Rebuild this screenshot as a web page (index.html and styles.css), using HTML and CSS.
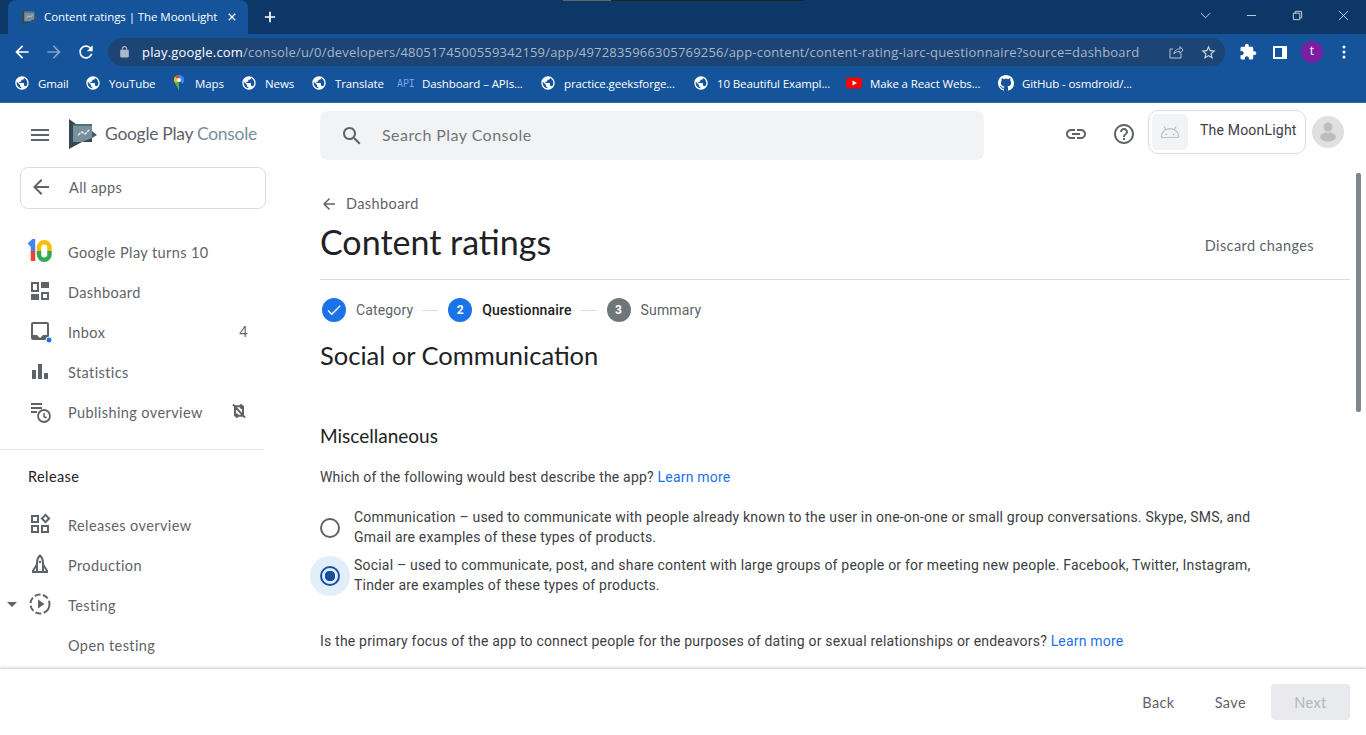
FILE: index.html
```html
<!DOCTYPE html>
<html lang="en">
<head>
<meta charset="utf-8">
<title>Content ratings | The MoonLight</title>
<link rel="stylesheet" href="styles.css">
</head>
<body>
<svg class="sprite" aria-hidden="true">
  <symbol id="globe" viewBox="0 0 24 24"><path d="M12 2C6.48 2 2 6.48 2 12s4.48 10 10 10 10-4.48 10-10S17.52 2 12 2zm-1 17.93c-3.95-.49-7-3.85-7-7.93 0-.62.08-1.21.21-1.79L9 15v1c0 1.1.9 2 2 2v1.93zm6.9-2.54c-.26-.81-1-1.39-1.9-1.39h-1v-3c0-.55-.45-1-1-1H8v-2h2c.55 0 1-.45 1-1V7h2c1.1 0 2-.9 2-2v-.41c2.93 1.19 5 4.06 5 7.41 0 2.08-.8 3.97-2.1 5.39z"/></symbol>
  <symbol id="arrow" viewBox="0 0 24 24"><path d="M20 11H7.83l5.59-5.59L12 4 4 12l8 8 1.41-1.41L7.83 13H20v-2z"/></symbol>
  <symbol id="play" viewBox="0 0 28 30"><path d="M0 0L7 5H4V23H13L0 30z" fill="#37474f"/><path d="M4 5h19v18H4z" fill="#78909c"/><path d="M4 5h19v2H4z" fill="#546e7a"/><path d="M23 12l5 4-5 3z" fill="#455a64"/><path d="M23 19L13 23H23z" fill="#37474f"/><path d="M9 16l4-3 3 2 4-4" fill="none" stroke="#eceff1" stroke-width="1.5" stroke-dasharray="3 1"/></symbol>
</svg>

<header class="chrome">
  <div class="tabstrip">
    <div class="notch"></div>
    <div class="tab">
      <svg class="tab-fav"><use href="#play"/></svg>
      <span class="tab-title">Content ratings | The MoonLight</span>
      <svg class="tab-x" viewBox="0 0 10 10"><path d="M1 1l8 8M9 1l-8 8"/></svg>
    </div>
    <svg class="tab-new" viewBox="0 0 14 14"><path d="M7 1v12M1 7h12"/></svg>
    <div class="winbtns">
      <svg class="win" viewBox="0 0 12 12"><path d="M1 3.5l5 5 5-5"/></svg>
      <svg class="win" viewBox="0 0 12 12"><path d="M1 6h10"/></svg>
      <svg class="win" viewBox="0 0 12 12"><path d="M1.5 3.5h7v7h-7zM3.5 3.5v-2h7v7h-2"/></svg>
      <svg class="win" viewBox="0 0 12 12"><path d="M1 1l10 10M11 1L1 11"/></svg>
    </div>
  </div>
  <div class="toolbar">
    <svg class="tool"><use href="#arrow"/></svg>
    <svg class="tool dim flip"><use href="#arrow"/></svg>
    <svg class="tool" viewBox="0 0 24 24"><path d="M17.65 6.35C16.2 4.9 14.21 4 12 4c-4.42 0-7.99 3.58-7.99 8s3.57 8 7.99 8c3.73 0 6.84-2.55 7.73-6h-2.08c-.82 2.33-3.04 4-5.65 4-3.31 0-6-2.69-6-6s2.69-6 6-6c1.66 0 3.14.69 4.22 1.78L13 11h7V4l-2.35 2.35z"/></svg>
    <div class="omnibox">
      <svg class="lock" viewBox="0 0 24 24"><path d="M18 8h-1V6c0-2.76-2.24-5-5-5S7 3.24 7 6v2H6c-1.1 0-2 .9-2 2v10c0 1.1.9 2 2 2h12c1.1 0 2-.9 2-2V10c0-1.1-.9-2-2-2zM9 6c0-1.66 1.34-3 3-3s3 1.34 3 3v2H9V6z"/></svg>
      <span class="url"><b>play.google.com</b>/console/u/0/developers/4805174500559342159/app/4972835966305769256/app-content/content-rating-iarc-questionnaire?source=dashboard</span>
      <svg class="share" viewBox="0 0 16 16"><path d="M13 9.5V14H2V5h3M6 10c0-3 2-5 6-5V2.500l3 3.500-3 3.500V7.500c-3 0-5 .5-6 2.500z"/></svg>
      <svg class="star" viewBox="0 0 24 24"><path d="M22 9.24l-7.19-.62L12 2 9.19 8.63 2 9.24l5.46 4.73L5.82 21 12 17.27 18.18 21l-1.630-7.030L22 9.240zM12 15.400l-3.760 2.270 1-4.280-3.320-2.880 4.380-.38L12 6.100l1.710 4.040 4.380.38-3.320 2.880 1 4.280L12 15.400z"/></svg>
    </div>
    <svg class="ext" viewBox="0 0 24 24"><path d="M20.500 11H19V7c0-1.100-.9-2-2-2h-4V3.500C13 2.120 11.880 1 10.500 1S8 2.120 8 3.500V5H4c-1.100 0-1.990.9-1.990 2v3.800H3.500c1.490 0 2.700 1.210 2.700 2.700s-1.210 2.700-2.700 2.700H2V20c0 1.100.9 2 2 2h3.800v-1.500c0-1.490 1.210-2.700 2.700-2.700 1.490 0 2.700 1.210 2.700 2.700V22H17c1.100 0 2-.9 2-2v-4h1.500c1.380 0 2.500-1.120 2.500-2.500S21.880 11 20.500 11z"/></svg>
    <svg class="panel" viewBox="0 0 14 13"><path fill-rule="evenodd" d="M0 0h14v13H0zM2 2v9h7V2z"/></svg>
    <span class="profile">t</span>
    <svg class="dots" viewBox="0 0 4 14"><circle cx="2" cy="2" r="1.500"/><circle cx="2" cy="7" r="1.500"/><circle cx="2" cy="12" r="1.500"/></svg>
  </div>
  <nav class="bookmarks">
    <a class="bm b1"><svg class="bm-ic"><use href="#globe"/></svg>Gmail</a>
    <a class="bm b2"><svg class="bm-ic"><use href="#globe"/></svg>YouTube</a>
    <a class="bm b3"><svg class="bm-ic" viewBox="0 0 16 16"><path d="M8 0C5 0 3 2.200 3 5c0 3.500 3.500 6 5 11V0z" fill="#4caf50"/><path d="M8 0c3 0 5 2.200 5 5 0 1.500-.7 2.800-1.500 4L8 5z" fill="#4285f4"/><path d="M8 0C6.500 0 5 .6 4 1.800L8 5z" fill="#ea4335"/><path d="M3 5c0-1.200.4-2.300 1-3.200L8 5 5 8C4 7 3 6 3 5z" fill="#fbbc04"/><circle cx="8" cy="5" r="1.900" fill="#fff"/></svg>Maps</a>
    <a class="bm b4"><svg class="bm-ic"><use href="#globe"/></svg>News</a>
    <a class="bm b5"><svg class="bm-ic"><use href="#globe"/></svg>Translate</a>
    <a class="bm b6"><span class="api">API</span>Dashboard – APIs...</a>
    <a class="bm b7"><svg class="bm-ic"><use href="#globe"/></svg>practice.geeksforge...</a>
    <a class="bm b8"><svg class="bm-ic"><use href="#globe"/></svg>10 Beautiful Exampl...</a>
    <a class="bm b9"><svg class="bm-ic" viewBox="0 0 16 16"><rect y="2.500" width="16" height="11" rx="3" fill="#f00"/><path d="M6.500 5.500L11 8l-4.500 2.500z" fill="#fff"/></svg>Make a React Webs...</a>
    <a class="bm b10"><svg class="bm-ic" viewBox="0 0 16 16"><path d="M8 0C3.580 0 0 3.580 0 8c0 3.540 2.290 6.530 5.470 7.590.4.07.55-.17.55-.38 0-.19-.01-.82-.01-1.490-2.010.37-2.530-.49-2.690-.94-.09-.23-.48-.94-.82-1.130-.28-.15-.68-.52-.01-.53.63-.01 1.080.58 1.230.82.720 1.210 1.870.87 2.330.66.070-.52.280-.87.510-1.070-1.780-.2-3.640-.89-3.640-3.950 0-.87.310-1.590.82-2.150-.080-.2-.360-1.020.080-2.120 0 0 .67-.21 2.200.82.640-.18 1.320-.27 2-.27s1.360.09 2 .27c1.530-1.040 2.200-.82 2.200-.82.440 1.100.160 1.920.080 2.120.510.560.820 1.270.820 2.150 0 3.070-1.870 3.750-3.650 3.950.290.250.540.730.540 1.480 0 1.070-.010 1.930-.010 2.200 0 .21.150.46.550.38A8.010 8.010 0 0016 8c0-4.420-3.580-8-8-8z"/></svg>GitHub - osmdroid/...</a>
  </nav>
</header>

<div class="workspace">
  <aside class="sidebar">
    <div class="brand">
      <svg class="ic24 hamburger" viewBox="0 0 24 24"><path d="M3 18h18v-2H3v2zm0-5h18v-2H3v2zm0-7v2h18V6H3z"/></svg>
      <svg class="brand-logo"><use href="#play"/></svg>
      <span class="brand-name">Google Play <em>Console</em></span>
    </div>
    <div class="allapps"><svg class="ic24"><use href="#arrow"/></svg><span>All apps</span></div>
    <ul class="navlist first">
      <li class="navitem">
        <svg class="ic24 ten" viewBox="0 0 24 24"><path d="M1 6l4-3.500V13" fill="none" stroke="#4285f4" stroke-width="4.500"/><path d="M5 12v10" fill="none" stroke="#ea4335" stroke-width="4.500"/><path d="M11 12V8.500a5 5 0 0 1 10.500 0V12" fill="none" stroke="#fbbc04" stroke-width="4.500"/><path d="M11 12v3.500a5 5 0 0 0 10.500 0V12" fill="none" stroke="#34a853" stroke-width="4.500"/></svg>
        <span>Google Play turns 10</span>
      </li>
      <li class="navitem">
        <svg class="ic24" viewBox="0 0 24 24"><path fill-rule="evenodd" d="M3 3h8v10H3zM5 5v6h4V5zM13 13h8v8h-8zM15 15v4h4v-4z"/><path d="M13 3h8v6h-8zM3 15h8v6H3z"/></svg>
        <span>Dashboard</span>
      </li>
      <li class="navitem">
        <svg class="ic24" viewBox="0 0 24 24"><path d="M19 3H5a2 2 0 0 0-2 2v14a2 2 0 0 0 2 2h14a2 2 0 0 0 2-2V5a2 2 0 0 0-2-2zm0 13h-4l-3 3-3-3H5V5h14z"/><circle class="dot" cx="21" cy="21" r="3"/></svg>
        <span>Inbox</span><i class="count">4</i>
      </li>
      <li class="navitem">
        <svg class="ic24" viewBox="0 0 24 24"><path d="M4 11h4v9H4zM10 5h4v15h-4zM16 14h4v6h-4z"/></svg>
        <span>Statistics</span>
      </li>
      <li class="navitem">
        <svg class="ic24" viewBox="0 0 24 24"><path d="M3 4h11v2H3zM3 8h11v2H3zM3 12h6v2H3z"/><circle cx="16" cy="17" r="6" fill="none" stroke="#5f6368" stroke-width="1.800"/><path d="M16 14v3.500l2.500 1.500" fill="none" stroke="#5f6368" stroke-width="1.500"/></svg>
        <span>Publishing overview</span>
        <svg class="sync" viewBox="0 0 24 24"><path d="M6 20V5h10M18 4v15H8M3 2l18 20M14 2l3 3-3 3M10 16l-3 3 3 3" fill="none" stroke="#5f6368" stroke-width="3"/></svg>
      </li>
    </ul>
    <div class="sidesep"></div>
    <div class="sidehead">Release</div>
    <ul class="navlist">
      <li class="navitem">
        <svg class="ic24" viewBox="0 0 24 24"><path fill-rule="evenodd" d="M3 3h8v8H3zM5 5v4h4V5zM3 13h8v8H3zM5 15v4h4v-4zM13 13h8v8h-8zM15 15v4h4v-4zM17.500 1.500l5 5-5 5-5-5zM17.500 4.300l-2.200 2.200 2.200 2.200 2.200-2.200z"/></svg>
        <span>Releases overview</span>
      </li>
      <li class="navitem">
        <svg class="ic24" viewBox="0 0 24 24"><path d="M12 3.500c2 1.800 3 4.200 3 7V20H9v-9.500c0-2.800 1-5.200 3-7z" fill="none" stroke="#5f6368" stroke-width="2"/><path d="M8.500 11.500L4 18.500V21h5v-2H6l2.500-4zM15.500 11.500l4.500 7V21h-5v-2h3l-2.500-4z"/><circle cx="12" cy="10" r="1.200"/></svg>
        <span>Production</span>
      </li>
      <li class="navitem">
        <span class="caret"></span>
        <svg class="ic24" viewBox="0 0 24 24"><circle cx="12" cy="12" r="9.500" fill="none" stroke="#5f6368" stroke-width="2" stroke-dasharray="11 2.500 6 2.500 6 2.500 6 2.500 6 2.500 6 2.500"/><path d="M10 7.500l6.500 4.500-6.500 4.500z"/></svg>
        <span>Testing</span>
      </li>
      <li class="navitem">
        <span class="blank"></span>
        <span>Open testing</span>
      </li>
    </ul>
  </aside>

  <main class="main">
    <div class="topbar">
      <div class="search">
        <svg class="ic24" viewBox="0 0 24 24"><path d="M15.500 14h-.79l-.28-.27C15.410 12.590 16 11.110 16 9.500 16 5.910 13.090 3 9.500 3S3 5.910 3 9.500 5.910 16 9.500 16c1.610 0 3.090-.59 4.230-1.570l.27.28v.79l5 4.990L20.490 19l-4.990-5zm-6 0C7.010 14 5 11.990 5 9.500S7.010 5 9.500 5 14 7.010 14 9.500 11.990 14 9.500 14z"/></svg>
        <span>Search Play Console</span>
      </div>
      <svg class="ic24 top-ic" viewBox="0 0 24 24"><path d="M3.900 12c0-1.710 1.390-3.100 3.100-3.100h4V7H7c-2.760 0-5 2.240-5 5s2.240 5 5 5h4v-1.900H7c-1.710 0-3.100-1.390-3.100-3.100zM8 13h8v-2H8v2zm9-6h-4v1.900h4c1.710 0 3.100 1.390 3.100 3.100s-1.390 3.100-3.100 3.100h-4V17h4c2.760 0 5-2.240 5-5s-2.240-5-5-5z"/></svg>
      <svg class="ic24 top-ic help" viewBox="0 0 24 24"><path d="M11 18h2v-2h-2v2zm1-16C6.480 2 2 6.480 2 12s4.480 10 10 10 10-4.480 10-10S17.520 2 12 2zm0 18c-4.410 0-8-3.590-8-8s3.590-8 8-8 8 3.590 8 8-3.590 8-8 8zm0-14c-2.210 0-4 1.790-4 4h2c0-1.100.9-2 2-2s2 .9 2 2c0 2-3 1.750-3 5h2c0-2.250 3-2.500 3-5 0-2.210-1.790-4-4-4z"/></svg>
      <div class="appchip">
        <span class="appicon"><svg viewBox="0 0 24 24"><path d="M2.500 18c0-4 2-7 5-8.500L5.500 6M21.500 18c0-4-2-7-5-8.500l2-3.500M2.500 18h19M7.500 9.500a10 10 0 0 1 9 0" fill="#e3e5e8" stroke="#bdc1c6" stroke-width="1.300"/><circle cx="8" cy="14.500" r="1" fill="#bdc1c6"/><circle cx="16" cy="14.500" r="1" fill="#bdc1c6"/></svg></span>
        <span class="appname">The MoonLight</span>
      </div>
      <span class="avatar"><svg viewBox="0 0 32 32"><circle cx="16" cy="11" r="4.500"/><ellipse cx="16" cy="21" rx="8" ry="4.500"/></svg></span>
    </div>

    <div class="content">
      <a class="backlink"><svg class="ic18"><use href="#arrow"/></svg>Dashboard</a>
      <div class="titlerow">
        <h1>Content ratings</h1>
        <span class="discard">Discard changes</span>
      </div>
      <ol class="stepper">
        <li class="step done"><span class="bubble"><svg viewBox="0 0 24 24"><path d="M9 16.170L4.830 12l-1.420 1.410L9 19 21 7l-1.410-1.410z"/></svg></span>Category</li>
        <li class="line"></li>
        <li class="step active"><span class="bubble">2</span>Questionnaire</li>
        <li class="line"></li>
        <li class="step todo"><span class="bubble">3</span>Summary</li>
      </ol>
      <h2>Social or Communication</h2>
      <h3>Miscellaneous</h3>
      <p class="question">Which of the following would best describe the app? <a>Learn more</a></p>
      <div class="option">
        <span class="radio-wrap"><span class="radio"></span></span>
        <p>Communication – used to communicate with people already known to the user in one-on-one or small group conversations. Skype, SMS, and Gmail are examples of these types of products.</p>
      </div>
      <div class="option selected">
        <span class="radio-wrap"><span class="radio"></span></span>
        <p>Social – used to communicate, post, and share content with large groups of people or for meeting new people. Facebook, Twitter, Instagram, Tinder are examples of these types of products.</p>
      </div>
      <p class="question second">Is the primary focus of the app to connect people for the purposes of dating or sexual relationships or endeavors? <a>Learn more</a></p>
    </div>
    <div class="scrollthumb"></div>
  </main>
</div>

<footer class="actions">
  <span class="act">Back</span>
  <span class="act">Save</span>
  <span class="next">Next</span>
</footer>
</body>
</html>
```
FILE: styles.css
```css
* { box-sizing: border-box; }
html, body { margin: 0; height: 100%; }
body {
  width: 1366px; height: 735px; overflow: hidden; background: #fff;
  display: flex; flex-direction: column;
  font-family: Roboto, "Liberation Sans", sans-serif; color: #3c4043;
}
.sprite { position: absolute; width: 0; height: 0; }
ul, ol { list-style: none; margin: 0; padding: 0; }
h1, h2, h3, p { margin: 0; font-weight: 400; }

/* browser chrome */
.chrome { flex: none; height: 103px; background: #15539a; border-bottom: 1px solid #2d69ad; font-family: "Open Sans", sans-serif; color: #fff; }
.tabstrip { position: relative; height: 34px; background: #0d3766; display: flex; padding-left: 8px; }
.notch { position: absolute; left: 563px; top: 0; width: 241px; height: 1px; background: linear-gradient(90deg, #666 0 48px, #222 48px); }
.tab { width: 240px; height: 34px; background: #15539a; border-radius: 8px 8px 0 0; display: flex; align-items: center; padding: 0 12px 0 14px; }
.tab-fav { width: 15px; height: 16px; flex: none; }
.tab-title { font-size: 11.5px; letter-spacing: -.07px; margin: 0 0 2px 7px; white-space: nowrap; flex: 1; }
.tab-x { width: 8px; height: 8px; stroke: #fff; stroke-width: 1.6; fill: none; }
.tab-new { width: 12px; height: 12px; stroke: #fff; stroke-width: 2; fill: none; margin: 11px 0 0 16px; }
.winbtns { margin-left: auto; display: flex; align-items: center; height: 30px; padding-right: 17px; gap: 35px; }
.win { width: 11px; height: 11px; stroke: #fff; stroke-width: .9; fill: none; opacity: .9; }
.toolbar { height: 34px; padding: 2px 0 0 12px; display: flex; align-items: center; fill: #fff; }
.tool { width: 20px; height: 20px; margin-right: 12px; flex: none; }
.tool.dim { opacity: .45; }
.tool.flip { transform: scaleX(-1); }
.omnibox { width: 1117px; height: 28px; border-radius: 14px; background: #1c4475; display: flex; align-items: center; padding: 0 8px 0 10px; flex: none; }
.lock { width: 13px; height: 14px; fill: #aab7c7; flex: none; }
.url { font-size: 13px; letter-spacing: .19px; color: #a9b6c6; margin-left: 11px; white-space: nowrap; }
.url b { font-weight: 400; color: #fff; }
.share { width: 16px; height: 16px; stroke: #b6c2d0; fill: none; margin-left: auto; flex: none; }
.star { width: 17px; height: 17px; fill: #cdd5df; margin-left: 16px; flex: none; }
.ext { width: 18px; height: 18px; flex: none; margin-left: 14px; }
.panel { width: 14px; height: 13px; flex: none; margin-left: 16px; }
.profile { width: 22px; height: 22px; flex: none; border-radius: 50%; background: #7b1fa2; font-size: 12px; line-height: 20px; text-align: center; margin-left: 14px; }
.dots { width: 4px; height: 14px; flex: none; margin-left: 19px; }
.bookmarks { height: 30px; display: flex; align-items: center; padding-left: 14px; font-size: 11.5px; letter-spacing: -.12px; fill: #fff; }
.bm { display: flex; align-items: center; white-space: nowrap; }
.bm-ic { width: 16px; height: 16px; margin-right: 8px; flex: none; }
.bm.b1 { width: 71px; }
.bm.b2 { width: 86px; }
.bm.b3 { width: 70px; }
.bm.b4 { width: 70px; }
.bm.b5 { width: 86px; }
.bm.b6 { width: 143px; }
.bm.b7 { width: 153px; }
.bm.b8 { width: 153px; }
.bm.b9 { width: 152px; }
.api { font: 10px "DejaVu Sans Mono", monospace; color: #7f9fe8; margin-right: 8px; width: 17px; }

/* workspace */
.workspace { flex: 1; min-height: 0; display: flex; overflow: hidden; }
.sidebar { width: 264px; flex: none; font-family: Lato, sans-serif; color: #5f6368; fill: #5f6368; }
.ic24 { width: 24px; height: 24px; flex: none; fill: #5f6368; }
.ic18 { width: 18px; height: 18px; flex: none; fill: #5f6368; }
.brand { height: 64px; display: flex; align-items: center; padding-left: 28px; }
.hamburger { margin-right: 17px; }
.brand-logo { width: 28px; height: 30px; flex: none; margin: 0 8px 2px 0; }
.brand-name { font-size: 17.5px; color: #5f6368; letter-spacing: -.3px; white-space: nowrap; margin-bottom: 3px; }
.brand-name em { font-style: normal; color: #78909c; }
.allapps { margin-left: 20px; width: 246px; height: 42px; border: 1px solid #dadce0; border-radius: 8px; display: flex; align-items: center; padding: 0 0 2px 8px; font-size: 14.5px; letter-spacing: .4px; color: #5f6368; }
.allapps span { margin-left: 16px; }
.navlist.first { margin-top: 22px; }
.navitem { position: relative; height: 40px; padding-left: 28px; display: flex; align-items: center; font-size: 14.5px; letter-spacing: .4px; white-space: nowrap; }
.navitem > span:not(.caret):not(.blank) { margin: 2px 0 0 16px; }
.dot { fill: #1a73e8; stroke: #fff; stroke-width: 1; }
.count { position: absolute; right: 16px; font-style: normal; }
.sync { position: absolute; right: 17px; width: 16px; height: 16px; }
.caret { position: absolute; left: 7px; top: 18px; border: 5px solid transparent; border-top-color: #5f6368; border-bottom: 0; }
.blank { width: 24px; flex: none; }
.sidesep { height: 1px; background: #e8eaed; margin-top: 18px; }
.sidehead { font-size: 14.5px; letter-spacing: .4px; color: #202124; padding-left: 28px; margin: 18px 0 19px; line-height: 17px; }

/* main */
.main { position: relative; flex: 1; min-width: 0; padding-left: 56px; }
.topbar { height: 64px; display: flex; align-items: flex-start; padding-top: 8px; fill: #5f6368; }
.search { width: 664px; height: 49px; background: #f1f3f4; border-radius: 8px; display: flex; align-items: center; padding-left: 20px; font: 16px Lato, sans-serif; color: #70757a; letter-spacing: .45px; }
.search span { margin: 0 0 3px 18px; }
.top-ic { margin: 11px 0 0 80px; }
.top-ic.help { margin-left: 24px; }
.appchip { width: 158px; height: 44px; margin: -1px 0 0 12px; border: 1px solid #dadce0; border-radius: 10px; display: flex; padding: 3px; font-size: 14px; letter-spacing: .2px; color: #3c4043; }
.appicon { width: 36px; height: 36px; background: #f1f3f4; border-radius: 6px; display: flex; align-items: center; justify-content: center; }
.appicon svg { width: 22px; height: 22px; }
.appname { margin: 8px 0 0 12px; white-space: nowrap; }
.avatar { width: 32px; height: 32px; border-radius: 50%; background: #e0e0e0; margin: 5px 0 0 6px; }
.avatar svg { display: block; fill: #bdbdbd; }
.content { padding-top: 27px; width: 1030px; }
.backlink { display: flex; align-items: center; gap: 8px; font: 14.5px/20px Lato, sans-serif; letter-spacing: .4px; color: #5f6368; height: 20px; }
.titlerow { display: flex; justify-content: space-between; align-items: center; height: 65px; margin-top: 1px; border-bottom: 1px solid #dadce0; padding-bottom: 10px; padding-right: 36px; }
h1 { font: 400 34px/40px Lato, sans-serif; color: #202124; }
.discard { font: 14.5px Lato, sans-serif; letter-spacing: .4px; color: #5f6368; margin-top: 6px; }
.stepper { display: flex; align-items: center; height: 24px; margin-top: 18px; padding-left: 2px; font-size: 14px; letter-spacing: .15px; color: #5f6368; }
.step { display: flex; align-items: center; gap: 10px; }
.bubble { width: 24px; height: 24px; border-radius: 50%; background: #1a73e8; color: #fff; font: 700 12px/24px Roboto, sans-serif; text-align: center; }
.bubble svg { width: 18px; height: 18px; margin-top: 3px; fill: #fff; }
.step.active { color: #202124; font-weight: 500; }
.step.todo .bubble { background: #70757a; }
.line { width: 16px; height: 1px; background: #dadce0; margin: 0 10px 0 9px; }
h2 { font: 400 25.5px/32px Lato, sans-serif; color: #202124; margin-top: 17px; }
h3 { font: 400 19px/24px Lato, sans-serif; color: #202124; margin-top: 53px; }
.question { font-size: 14px; line-height: 20px; letter-spacing: .2px; color: #3c4043; margin-top: 19px; }
.question a { color: #1a73e8; }
.question.second { margin-top: 35px; }
.option { display: flex; align-items: center; height: 40px; margin-left: -10px; width: 944px; }
.question + .option { margin-top: 21px; }
.option + .option { margin-top: 8px; }
.option p { font-size: 14px; line-height: 20px; letter-spacing: .2px; color: #3c4043; margin: 0 0 2px 4px; width: 900px; }
.radio-wrap { width: 40px; height: 40px; flex: none; border-radius: 50%; display: flex; align-items: center; justify-content: center; }
.radio { width: 20px; height: 20px; border: 2px solid #5f6368; border-radius: 50%; display: block; }
.selected .radio-wrap { background: #e3eefb; }
.selected .radio { border-color: #174ea6; background: radial-gradient(circle, #174ea6 0 5px, transparent 5.5px); }
.scrollthumb { position: absolute; top: 70px; right: 5px; width: 5px; height: 239px; background: #80868b; border-radius: 2px; }

/* footer */
.actions { flex: none; height: 66px; position: relative; background: #fff; box-shadow: 0 -1px 3px rgba(60,64,67,.3); display: flex; align-items: center; justify-content: flex-end; padding-right: 16px; font: 14.5px Lato, sans-serif; letter-spacing: .4px; color: #5f6368; }
.act { margin-right: 40px; }
.act + .act { margin-right: 25px; }
.next { width: 79px; height: 36px; background: #e8eaed; border-radius: 4px; color: #b4b6b8; display: flex; align-items: center; justify-content: center; }
```
